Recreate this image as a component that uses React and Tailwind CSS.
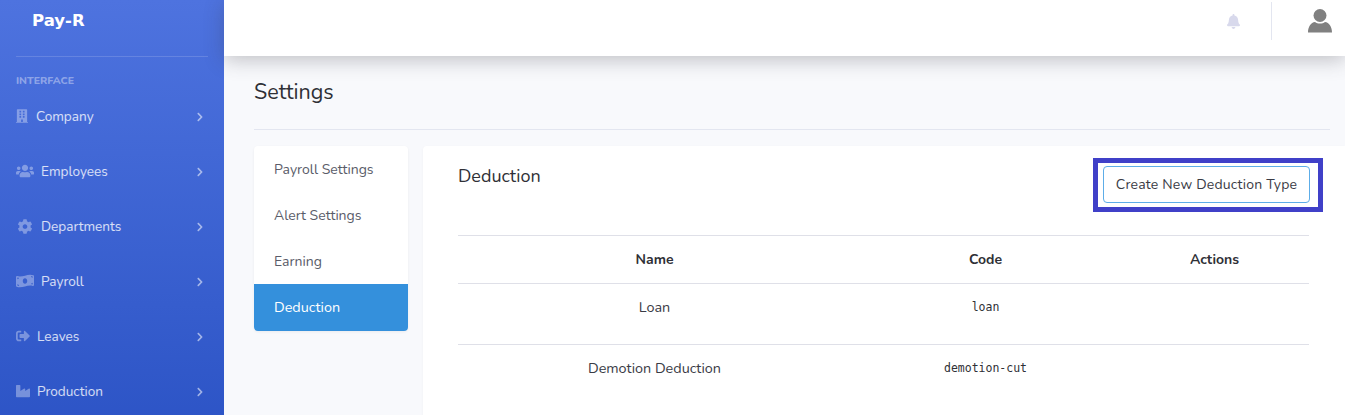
import React from "react";
import { FaBuilding, FaUsers, FaCog, FaMoneyBillWave, FaSignOutAlt, FaIndustry, FaChevronRight, FaBell } from "react-icons/fa";

const navItems = [
  { label: "Company", icon: FaBuilding, iconClass: "w-[12px] h-[16px]", gap: "gap-[8px]" },
  { label: "Employees", icon: FaUsers, iconClass: "w-[18px] h-[16px]", gap: "gap-[7px]" },
  { label: "Departments", icon: FaCog, iconClass: "w-[18px] h-[15px]", gap: "gap-[7px]" },
  { label: "Payroll", icon: FaMoneyBillWave, iconClass: "w-[18px] h-[16px]", gap: "gap-[7px]" },
  { label: "Leaves", icon: FaSignOutAlt, iconClass: "w-[14px] h-[14px]", gap: "gap-[7px]" },
  { label: "Production", icon: FaIndustry, iconClass: "w-[14px] h-[14px]", gap: "gap-[7px]" },
];

const tabs = ["Payroll Settings", "Alert Settings", "Earning"];

const rows = [
  { name: "Loan", code: "loan" },
  { name: "Demotion Deduction", code: "demotion-cut" },
];

export default function App() {
  return (
    <div className="flex h-screen overflow-hidden bg-[#f8f9fc] font-['Nunito','Lato','Noto_Sans',sans-serif] text-[14px] text-[#3a3b45]">
      {/* Sidebar */}
      <aside className="w-[224px] shrink-0 h-[560px] bg-gradient-to-b from-[#4e73df] to-[#224abe] px-[16px]">
        <div className="h-[57px] pl-[16px] pt-[11px] border-b border-white/15 font-['DejaVu_Sans',sans-serif] text-[16.5px] leading-[20px] font-bold text-white">
          Pay-R
        </div>
        <div className="mt-[17px] text-[10.5px] leading-[13px] font-extrabold text-white/40 uppercase">Interface</div>
        <nav className="mt-[2px]">
          {navItems.map(({ label, icon: Icon, iconClass, gap }) => (
            <a key={label} className="flex items-center h-[55px] pr-[4px] text-white/80">
              <span className={`flex items-center ${gap}`}>
                <Icon className={`${iconClass} text-white/35`} />
                <span className="text-[13.6px] pt-[2px]">{label}</span>
              </span>
              <FaChevronRight className="ml-auto w-[8px] h-[10px] text-white/55" />
            </a>
          ))}
        </nav>
      </aside>

      <div className="flex-1 min-w-0">
        {/* Top bar */}
        <header className="relative h-[56px] bg-white shadow-[0_4px_20px_rgba(58,59,69,0.3)] flex items-center justify-end">
          <FaBell className="w-[13px] h-[15px] text-[#d8d9ec] mr-[31px] mb-[13px]" />
          <div className="w-px h-[38px] bg-[#e3e6f0] mb-[14px]"></div>
          <svg viewBox="0 0 24 24" className="w-[24px] h-[24px] ml-[36px] mr-[13px] mb-[14px] text-[#808080]" fill="currentColor">
            <circle cx="12" cy="6.500" r="6.500" />
            <path d="M0 23.500c0-6 3-10 7-10.500c1.500 1 3 1.500 5 1.500s3.500-.5 5-1.500c4 .5 7 4.500 7 10.500z" />
          </svg>
        </header>

        <main className="pl-[30px]">
          <div className="mr-[15px] h-[74px] border-b border-[#e3e6f0] flex items-center">
            <h1 className="text-[21.5px] text-[#2f3036]">Settings</h1>
          </div>

          <div className="flex gap-[15px] mt-[16px]">
            {/* Tabs */}
            <div className="w-[154px] h-[185px] shrink-0 bg-white rounded-[4px] overflow-hidden shadow-[0_1px_3px_rgba(0,0,0,0.06)]">
              {tabs.map((t) => (
                <div key={t} className="h-[46px] pl-[20px] flex items-center text-[#5a5c69]">
                  {t}
                </div>
              ))}
              <div className="h-[47px] pl-[20px] flex items-center bg-[#3490dc] text-white text-[14.4px]">Deduction</div>
            </div>

            {/* Card */}
            <section className="flex-1 min-w-0 bg-white rounded-tl-[4px] h-[300px] pl-[35px] pr-[36px] shadow-[0_1px_3px_rgba(0,0,0,0.04)]">
              <div className="flex justify-between h-[89px]">
                <h2 className="mt-[18px] text-[18px] leading-[24px] text-[#2f3036]">Deduction</h2>
                <div className="mt-[12px] mr-[-14px] h-[54px] w-[230px] border-[5px] border-[#4040c8] pl-[5px] pt-[3px]">
                  <button className="block w-[207px] h-[37px] bg-white border border-[#5dade8] rounded-[4px] text-[14px] tracking-[0.2px] text-[#3a3b45]">
                    Create New Deduction Type
                  </button>
                </div>
              </div>

              <table className="w-full table-fixed border-t border-[#dfe0e8]">
                <thead>
                  <tr className="h-[48px] border-b border-[#dfe0e8]">
                    <th className="w-[393px] font-bold text-[#2f3036]">Name</th>
                    <th className="w-[269px] font-bold text-[#2f3036]">Code</th>
                    <th className="font-bold text-[#2f3036]">Actions</th>
                  </tr>
                </thead>
                <tbody>
                  {rows.map((r, i) => (
                    <tr key={r.code} className={i === 0 ? "h-[61px] border-b border-[#dfe0e8]" : "h-[61px]"}>
                      <td className="text-center align-top pt-[13px] text-[14.4px] text-[#3a3b45]">{r.name}</td>
                      <td className="text-center align-top pt-[14px] font-['DejaVu_Sans_Mono',monospace] text-[11.5px] leading-[18px] text-[#2f3036]">
                        {r.code}
                      </td>
                      <td></td>
                    </tr>
                  ))}
                </tbody>
              </table>
            </section>
          </div>
        </main>
      </div>
    </div>
  );
}
